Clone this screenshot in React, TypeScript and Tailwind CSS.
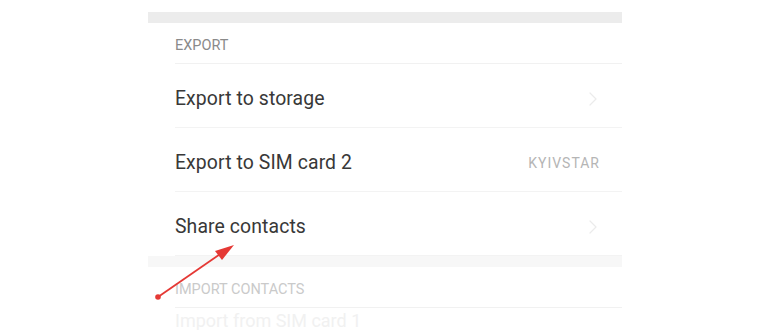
import { ChevronRight } from 'lucide-react';

const rows = [
  { label: 'Export to storage', chevron: true },
  { label: 'Export to SIM card 2', value: 'KYIVSTAR' },
  { label: 'Share contacts', chevron: true },
];

function SectionHeader({ title, faded }: { title: string; faded?: boolean }) {
  return (
    <div className="ml-[27px] flex h-[41px] items-center border-b border-[#f1f1f1] pt-[6px]">
      <span className={`text-[14.5px] ${faded ? 'text-[#cacaca]' : 'text-[#8a8a8a]'}`}>{title}</span>
    </div>
  );
}

export default function App() {
  return (
    <div className="relative h-[330px] w-[770px] overflow-hidden bg-white font-['Roboto',sans-serif]">
      <div className="ml-[148px] w-[474px] pt-[12px]">
        <div className="h-[11px] bg-[#ececec]" />
        <SectionHeader title="EXPORT" />
        {rows.map((row) => (
          <div
            key={row.label}
            className="ml-[27px] flex h-[64px] items-center justify-between border-b border-[#f3f3f3] pr-[22px] pt-[7px]"
          >
            <span className="text-[19.4px] tracking-[0.1px] text-[#383838]">{row.label}</span>
            {row.chevron && <ChevronRight size={24} strokeWidth={1.2} className="-mr-[5px] text-[#ebebeb]" />}
            {row.value && <span className="text-[14px] tracking-[1px] text-[#b5b5b5]">{row.value}</span>}
          </div>
        ))}
        <div className="h-[11px] bg-[#f7f7f7]" />
        <SectionHeader title="IMPORT CONTACTS" faded />
        <div className="ml-[27px] flex h-[22px] items-end">
          <span className="text-[18px] leading-[18px] text-[#f1f1f1]">Import from SIM card 1</span>
        </div>
      </div>

      <svg className="absolute left-0 top-0" width="770" height="330" viewBox="0 0 770 330">
        <line x1="158" y1="297" x2="226" y2="250" stroke="#e53935" strokeWidth="1.8" />
        <polygon points="234,245 215,251 222,260" fill="#e53935" />
        <circle cx="158" cy="297" r="2.8" fill="#e53935" />
      </svg>
    </div>
  );
}
